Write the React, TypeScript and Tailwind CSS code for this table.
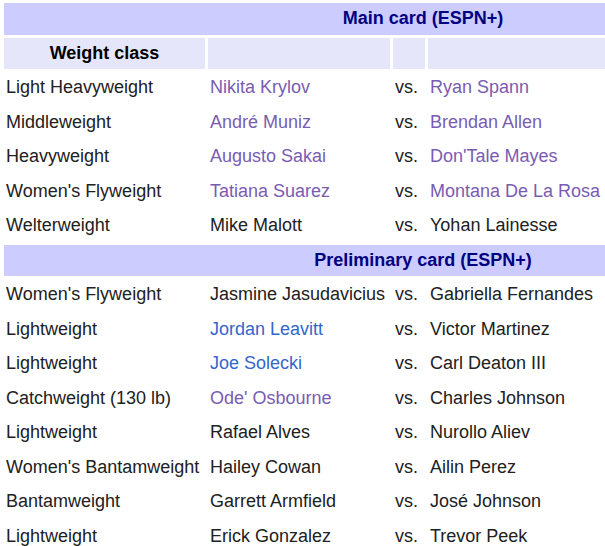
import React from "react";

type Fighter = { name: string; link?: "visited" | "new" };
type Bout = { weight: string; a: Fighter; b: Fighter };

const mainCard: Bout[] = [
  { weight: "Light Heavyweight", a: { name: "Nikita Krylov", link: "visited" }, b: { name: "Ryan Spann", link: "visited" } },
  { weight: "Middleweight", a: { name: "André Muniz", link: "visited" }, b: { name: "Brendan Allen", link: "visited" } },
  { weight: "Heavyweight", a: { name: "Augusto Sakai", link: "visited" }, b: { name: "Don'Tale Mayes", link: "visited" } },
  { weight: "Women's Flyweight", a: { name: "Tatiana Suarez", link: "visited" }, b: { name: "Montana De La Rosa", link: "visited" } },
  { weight: "Welterweight", a: { name: "Mike Malott" }, b: { name: "Yohan Lainesse" } },
];

const prelimCard: Bout[] = [
  { weight: "Women's Flyweight", a: { name: "Jasmine Jasudavicius" }, b: { name: "Gabriella Fernandes" } },
  { weight: "Lightweight", a: { name: "Jordan Leavitt", link: "new" }, b: { name: "Victor Martinez" } },
  { weight: "Lightweight", a: { name: "Joe Solecki", link: "new" }, b: { name: "Carl Deaton III" } },
  { weight: "Catchweight (130 lb)", a: { name: "Ode' Osbourne", link: "visited" }, b: { name: "Charles Johnson" } },
  { weight: "Lightweight", a: { name: "Rafael Alves" }, b: { name: "Nurollo Aliev" } },
  { weight: "Women's Bantamweight", a: { name: "Hailey Cowan" }, b: { name: "Ailin Perez" } },
  { weight: "Bantamweight", a: { name: "Garrett Armfield" }, b: { name: "José Johnson" } },
  { weight: "Lightweight", a: { name: "Erick Gonzalez" }, b: { name: "Trevor Peek" } },
];

const cell = "px-[2px] py-[5px] text-left align-middle whitespace-nowrap overflow-hidden";

function Name({ f }: { f: Fighter }) {
  if (f.link === "visited") return <span className="text-[#795cb2]">{f.name}</span>;
  if (f.link === "new") return <span className="text-[#3366cc]">{f.name}</span>;
  return <>{f.name}</>;
}

function SectionHeader({ title }: { title: string }) {
  return (
    <tr>
      <th colSpan={4} className="bg-[#ccccff] text-[#000080] font-bold text-center px-[2px] py-[5px]">
        {title}
      </th>
    </tr>
  );
}

function BoutRow({ bout }: { bout: Bout }) {
  return (
    <tr>
      <td className={cell}>{bout.weight}</td>
      <td className={cell}>
        <Name f={bout.a} />
      </td>
      <td className={cell}>vs.</td>
      <td className={cell}>
        <Name f={bout.b} />
      </td>
    </tr>
  );
}

export default function App() {
  return (
    <div className="w-[605px] h-[546px] overflow-hidden bg-white">
      <table
        className="ml-[1px] table-fixed w-[844px] border-separate border-spacing-[3px] text-[18px] leading-[21.5px] text-[#202122]"
        style={{ fontFamily: '"Liberation Sans", Arial, sans-serif' }}
      >
        <colgroup>
          <col className="w-[201px]" />
          <col className="w-[182px]" />
          <col className="w-[32px]" />
          <col className="w-[414px]" />
        </colgroup>
        <tbody>
          <SectionHeader title="Main card (ESPN+)" />
          <tr>
            <th className="bg-[#e6e6fa] font-bold text-center text-black px-[2px] py-[5px]">
              Weight class
            </th>
            <th className="bg-[#e6e6fa] px-[2px] py-[5px]"></th>
            <th className="bg-[#e6e6fa] px-[2px] py-[5px]"></th>
            <th className="bg-[#e6e6fa] px-[2px] py-[5px]"></th>
          </tr>
          {mainCard.map((b, i) => (
            <BoutRow key={i} bout={b} />
          ))}
          <SectionHeader title="Preliminary card (ESPN+)" />
          {prelimCard.map((b, i) => (
            <BoutRow key={i} bout={b} />
          ))}
        </tbody>
      </table>
    </div>
  );
}
